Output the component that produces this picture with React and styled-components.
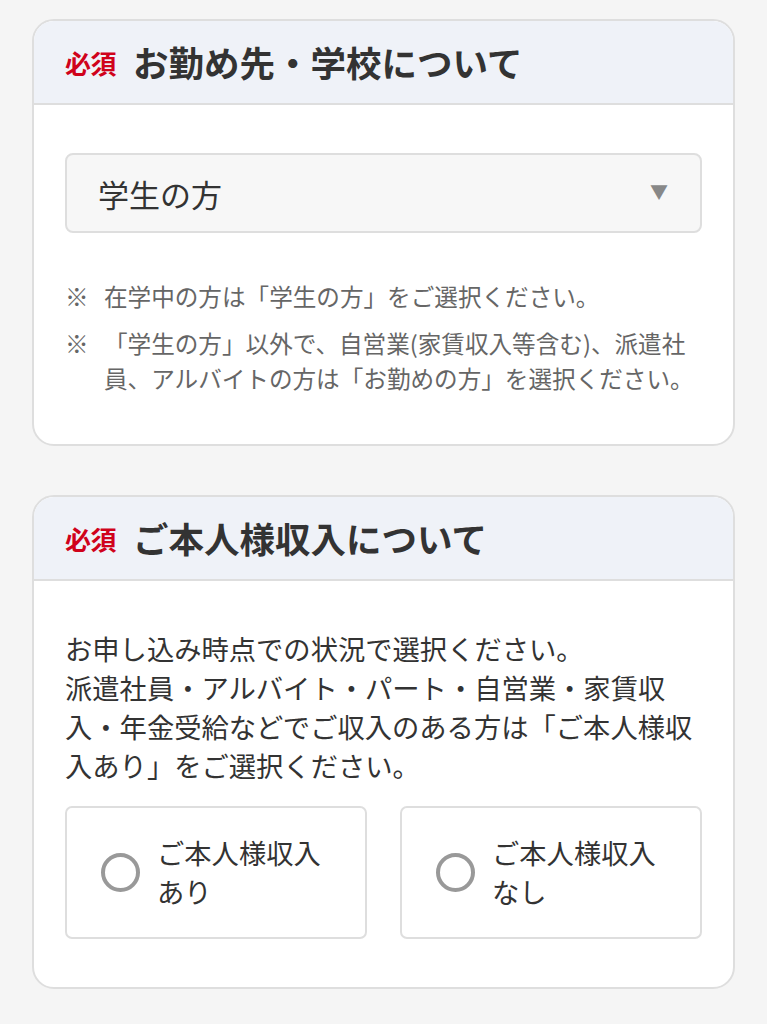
import { useState } from "react";
import styled, { createGlobalStyle } from "styled-components";

const GlobalStyle = createGlobalStyle`
  * {
    box-sizing: border-box;
  }
  body {
    margin: 0;
    background: #f5f5f5;
    font-family: "Noto Sans CJK JP", "Noto Sans", sans-serif;
    color: #333;
  }
`;

const Page = styled.main`
  display: flex;
  flex-direction: column;
  gap: 49px;
  padding: 19px 32px 36px;
`;

const Card = styled.section`
  background: #fff;
  border: 2px solid #dedede;
  border-radius: 22px;
  overflow: hidden;
`;

const CardHeader = styled.header`
  display: flex;
  align-items: center;
  gap: 17px;
  height: 84px;
  padding: 0 31px;
  background: #eff2f8;
  border-bottom: 2px solid #dedede;
`;

const Required = styled.span`
  color: #d0021b;
  font-size: 26px;
  font-weight: 700;
  letter-spacing: -0.5px;
`;

const Title = styled.h2`
  margin: 0;
  font-size: 35.5px;
  font-weight: 700;
  color: #333;
  padding-bottom: 2px;
`;

const CardBody = styled.div`
  padding: 48px 31px 48px;
`;

const SelectBox = styled.div`
  display: flex;
  align-items: center;
  justify-content: space-between;
  height: 80px;
  padding: 0 32px 0 31px;
  background: #f7f7f7;
  border: 2px solid #dedede;
  border-radius: 8px;
  font-size: 31px;
  color: #333;
  cursor: pointer;
`;

const Arrow = styled.span`
  color: #888;
  font-size: 18px;
  margin-top: -4px;
`;

const Notes = styled.ul`
  list-style: none;
  margin: 46px 0 0;
  padding: 0;
  display: flex;
  flex-direction: column;
  gap: 12px;
`;

const Note = styled.li`
  display: grid;
  grid-template-columns: 39px 1fr;
  font-size: 23.6px;
  line-height: 35px;
  color: #666;
`;

const Lead = styled.p`
  margin: 0;
  font-size: 27.3px;
  line-height: 39px;
  color: #333;
`;

const Options = styled.div`
  display: grid;
  grid-template-columns: 1fr 1fr;
  gap: 33px;
  margin-top: 21px;
`;

const Option = styled.label`
  display: flex;
  align-items: center;
  gap: 17px;
  min-height: 133px;
  padding: 0 34px 0 34px;
  border: 2px solid #dedede;
  border-radius: 7px;
  background: #fff;
  cursor: pointer;
`;

const Radio = styled.span`
  flex: none;
  width: 39px;
  height: 39px;
  border-radius: 50%;
  border: 4px solid ${(p) => (p.$checked ? "#d0021b" : "#999")};
  background: ${(p) => (p.$checked ? "radial-gradient(#d0021b 40%, #fff 42%)" : "#fff")};
`;

const OptionText = styled.span`
  font-size: 27.3px;
  line-height: 39px;
  color: #333;
  padding-bottom: 2px;
`;

export default function App() {
  const [income, setIncome] = useState(null);

  return (
    <>
      <GlobalStyle />
      <Page>
        <Card>
          <CardHeader>
            <Required>必須</Required>
            <Title>お勤め先・学校について</Title>
          </CardHeader>
          <CardBody>
            <SelectBox>
              <span>学生の方</span>
              <Arrow>▼</Arrow>
            </SelectBox>
            <Notes>
              <Note>
                <span>※</span>
                <span>在学中の方は「学生の方」をご選択ください。</span>
              </Note>
              <Note>
                <span>※</span>
                <span>
                  「学生の方」以外で、自営業(家賃収入等含む)、派遣社員、アルバイトの方は「お勤めの方」を選択ください。
                </span>
              </Note>
            </Notes>
          </CardBody>
        </Card>

        <Card>
          <CardHeader>
            <Required>必須</Required>
            <Title>ご本人様収入について</Title>
          </CardHeader>
          <CardBody>
            <Lead>
              お申し込み時点での状況で選択ください。
              <br />
              派遣社員・アルバイト・パート・自営業・家賃収入・年金受給などでご収入のある方は「ご本人様収入あり」をご選択ください。
            </Lead>
            <Options>
              {["あり", "なし"].map((v) => (
                <Option key={v} onClick={() => setIncome(v)}>
                  <Radio $checked={income === v} />
                  <OptionText>
                    ご本人様収入
                    <br />
                    {v}
                  </OptionText>
                </Option>
              ))}
            </Options>
          </CardBody>
        </Card>
      </Page>
    </>
  );
}
